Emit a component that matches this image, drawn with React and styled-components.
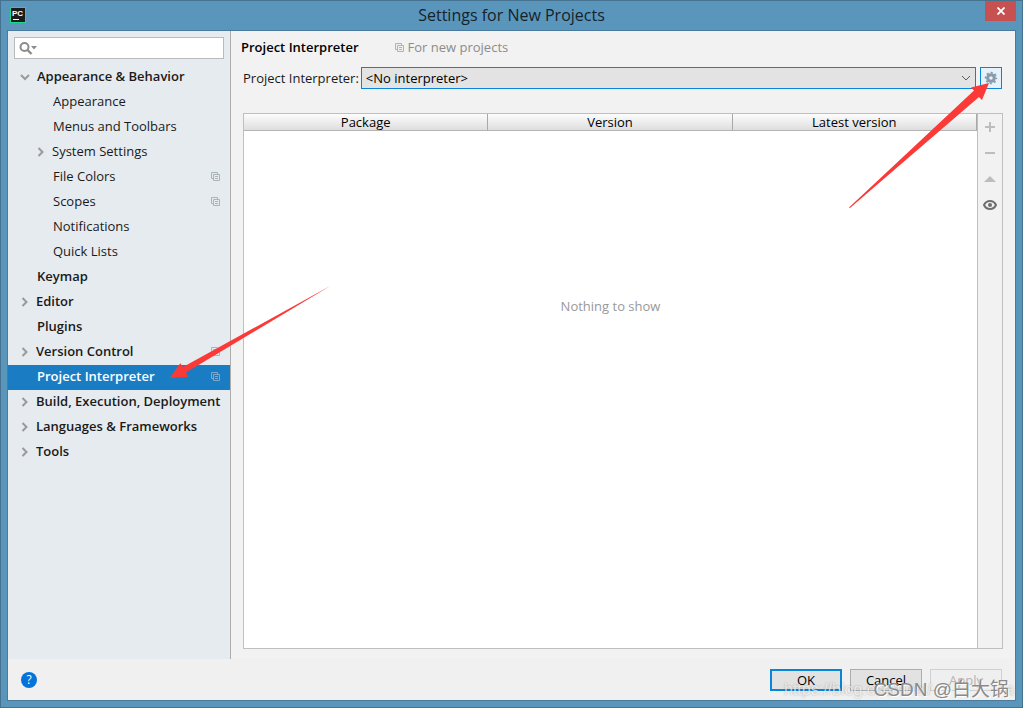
import React, { useState } from 'react';
import styled, { createGlobalStyle, css } from 'styled-components';

const GlobalStyle = createGlobalStyle`
  * {
    box-sizing: border-box;
  }

  body {
    margin: 0;
    font-family: 'Open Sans', 'Noto Sans CJK SC', sans-serif;
    font-size: 13px;
    color: #1a1a1a;
  }

  button, input, select {
    font: inherit;
    color: inherit;
    margin: 0;
    padding: 0;
    border-radius: 0;
    outline: none;
  }
`;

const Window = styled.div`
  position: relative;
  display: flex;
  flex-direction: column;
  min-height: 100vh;
  padding: 0 7px 6px;
  background: #5a96bc;
  border: 1px solid #44728f;
`;

const TitleBar = styled.header`
  display: grid;
  grid-template-columns: 32px 1fr 32px;
  align-items: start;
  height: 29px;
`;

const LogoBox = styled.span`
  display: flex;
  padding: 6px 0 0 2px;
`;

const WindowTitle = styled.h1`
  margin: 0;
  font-size: 16px;
  font-weight: 400;
  line-height: 29px;
  text-align: center;
  color: #16222b;
`;

const CloseButton = styled.button`
  display: flex;
  align-items: center;
  justify-content: center;
  justify-self: end;
  height: 20px;
  width: 31px;
  margin-right: -1px;
  border: 0;
  background: #c75050;
`;

const Dialog = styled.div`
  flex: 1;
  display: flex;
  flex-direction: column;
  border: 1px solid #4a7b9c;
  margin: 0 -1px;
  background: #f0f0f0;
`;

const Body = styled.div`
  flex: 1;
  display: flex;
`;

const Sidebar = styled.nav`
  flex: 0 0 223px;
  min-width: 0;
  border-right: 1px solid #adadad;
  background: #e6ebef;
`;

const SearchBox = styled.label`
  display: flex;
  align-items: center;
  height: 22px;
  margin: 6px 6px 5px;
  padding-left: 4px;
  border: 1px solid #bababa;
  background: #fff;
`;

const SearchInput = styled.input`
  flex: 1;
  min-width: 0;
  border: 0;
  background: transparent;
`;

const Tree = styled.ul`
  margin: 0;
  padding: 1px 0 0;
  list-style: none;
`;

const TreeRow = styled.a`
  display: flex;
  align-items: center;
  height: 25px;
  padding: 0 10px 2px ${({ $level }) => ($level ? 28 : 12)}px;
  text-decoration: none;
  white-space: nowrap;
  color: #1a1a1a;
  font-weight: ${({ $level }) => ($level ? 400 : 600)};

  ${({ $selected }) =>
    $selected &&
    css`
      background: #1a7dc4;
      color: #fff;
    `}
`;

const Arrow = styled.span`
  display: flex;
  flex: 0 0 ${({ $wide }) => ($wide ? 17 : 16)}px;
`;

const RowLabel = styled.span`
  flex: 1;
  min-width: 0;
  line-height: 16px;
  padding-bottom: 1px;
`;

const Content = styled.main`
  flex: 1;
  display: flex;
  flex-direction: column;
  min-width: 0;
  padding: 6px 12px 10px;
  background: #f2f2f2;
`;

const Heading = styled.div`
  display: flex;
  align-items: center;
  gap: 36px;
  height: 20px;
  margin-left: -2px;
`;

const HeadingTitle = styled.h2`
  margin: 0;
  font-size: 13px;
  font-weight: 600;
  color: #000;
`;

const Hint = styled.span`
  display: flex;
  align-items: center;
  gap: 4px;
  color: #8c8c8c;
`;

const InterpreterRow = styled.div`
  display: flex;
  align-items: center;
  gap: 4px;
  height: 22px;
  margin: 10px 1px 0 0;
`;

const FieldLabel = styled.label`
  flex: none;
  margin-right: -2px;
  white-space: nowrap;
`;

const SelectBox = styled.div`
  flex: 1;
  display: grid;
  align-items: center;
  height: 22px;
  border: 1px solid #0a84d8;
  background: #e3e3e3;

  > * {
    grid-area: 1 / 1;
  }

  > svg {
    justify-self: end;
    margin-right: 4px;
    pointer-events: none;
  }
`;

const Select = styled.select`
  appearance: none;
  width: 100%;
  height: 20px;
  padding-left: 4px;
  border: 0;
  background: transparent;
  color: #000;
`;

const GearButton = styled.button`
  display: flex;
  align-items: center;
  justify-content: center;
  width: 22px;
  height: 22px;
  border: 1px solid #0a84d8;
  background: #e5f1fb;
`;

const Packages = styled.section`
  flex: 1;
  display: flex;
  margin-top: 24px;
  border: 1px solid #bfbfbf;
`;

const TablePane = styled.div`
  flex: 1;
  background: #fff;
`;

const Table = styled.table`
  width: 100%;
  table-layout: fixed;
  border-collapse: separate;
  border-spacing: 0;
`;

const HeadCell = styled.th`
  height: 17px;
  padding: 0;
  font-weight: 400;
  line-height: 16px;
  color: #000;
  background: linear-gradient(#fdfdfd, #dedede);
  border-right: 1px solid #a8a8a8;
  border-bottom: 1px solid #b4b4b4;
`;

const EmptyCell = styled.td`
  padding: 166px 0 0;
  text-align: center;
  color: #999;
`;

const Actions = styled.div`
  display: flex;
  flex-direction: column;
  gap: 4px;
  width: 25px;
  padding-top: 2px;
  border-left: 1px solid #bfbfbf;
`;

const ActionButton = styled.button`
  display: flex;
  align-items: center;
  justify-content: center;
  height: 22px;
  border: 0;
  background: transparent;
`;

const Footer = styled.footer`
  display: flex;
  align-items: center;
  gap: 8px;
  height: 41px;
  padding: 1px 13px 0;
`;

const HelpButton = styled.button`
  width: 16px;
  height: 16px;
  margin-right: auto;
  border: 0;
  border-radius: 50%;
  background: #0573d8;
  color: #fff;
  font-size: 12px;
  line-height: 16px;
`;

const FooterButton = styled.button`
  width: 72px;
  height: 22px;
  border: ${({ $primary }) => ($primary ? '2px solid #0a84d8' : '1px solid #adadad')};
  background: #e2e2e2;
  line-height: 18px;
  color: #000;

  &:disabled {
    border-color: #d0d0d0;
    background: #efefef;
    color: #b4b4b4;
  }
`;

const Annotation = styled.svg`
  position: absolute;
  top: -1px;
  left: -1px;
  pointer-events: none;
`;

const Watermark = styled.span`
  position: absolute;
  right: 13px;
  bottom: 5px;
  font-family: 'Liberation Sans', 'Noto Sans CJK SC', sans-serif;
  font-size: 19px;
  line-height: 24px;
  color: #8a8a8a;
  text-shadow: 1px 1px 0 #fff;
  white-space: nowrap;
  pointer-events: none;
`;

const UrlMark = styled(Watermark)`
  display: flex;
  justify-content: space-between;
  width: 230px;
  right: 8px;
  font-size: 16px;
  color: rgba(255, 255, 255, 0.7);
  text-shadow: 0 0 2px rgba(0, 0, 0, 0.3);
`;

const PyCharmLogo = () => (
  <svg width="16" height="16" viewBox="0 0 16 16">
    <rect x="0.5" y="0.5" width="15" height="15" fill="#1c1c1c" stroke="#21d789" />
    <text x="2" y="9" fontSize="8" fontWeight="700" fill="#fff" fontFamily="Liberation Sans, sans-serif">
      PC
    </text>
    <path d="M3 12.5h6" stroke="#fff" />
  </svg>
);

const SearchIcon = () => (
  <svg width="19" height="14" viewBox="0 0 19 14" fill="none">
    <circle cx="5.5" cy="6" r="4" stroke="#8c8c8c" strokeWidth="2" />
    <path d="M8.5 9l4 4" stroke="#8c8c8c" strokeWidth="2.4" />
    <path d="M12 5h6l-3 3.5z" fill="#8c8c8c" />
  </svg>
);

const Chevron = ({ open }) => (
  <svg width="10" height="10" viewBox="0 0 10 10" fill="none" stroke="#9a9a9a" strokeWidth="2">
    <path d={open ? 'M1 3l4 4 4-4' : 'M2.5 1l4 4-4 4'} />
  </svg>
);

const CopyIcon = ({ color = '#a9b4ba' }) => (
  <svg width="9" height="9" viewBox="0 0 9 9" fill="none" stroke={color}>
    <path d="M2.5 6.5H0.5V0.5H6.5V2.5" />
    <path d="M2.5 2.5h6v6h-6zM4 4.5h3M4 6.5h3" />
  </svg>
);

const GearIcon = () => (
  <svg width="14" height="14" viewBox="0 0 14 14" fill="none" stroke="#8a9aa8">
    <circle cx="7" cy="7" r="3.3" strokeWidth="3" />
    <circle cx="7" cy="7" r="5.3" strokeWidth="1.8" strokeDasharray="2.1 2.063" strokeDashoffset="1.05" />
  </svg>
);

const EyeIcon = () => (
  <svg width="14" height="10" viewBox="0 0 14 10" fill="none" stroke="#6e6e6e">
    <path d="M1 5C3.5-0.3 10.5-0.3 13 5C10.5 10.3 3.5 10.3 1 5z" strokeWidth="2" />
    <circle cx="7" cy="5" r="2" fill="#6e6e6e" stroke="none" />
  </svg>
);

const treeItems = [
  { label: 'Appearance & Behavior', level: 0, arrow: 'open' },
  { label: 'Appearance', level: 1 },
  { label: 'Menus and Toolbars', level: 1 },
  { label: 'System Settings', level: 1, arrow: 'closed' },
  { label: 'File Colors', level: 1, copy: true },
  { label: 'Scopes', level: 1, copy: true },
  { label: 'Notifications', level: 1 },
  { label: 'Quick Lists', level: 1 },
  { label: 'Keymap', level: 0 },
  { label: 'Editor', level: 0, arrow: 'closed' },
  { label: 'Plugins', level: 0 },
  { label: 'Version Control', level: 0, arrow: 'closed', copy: true },
  { label: 'Project Interpreter', level: 0, copy: true },
  { label: 'Build, Execution, Deployment', level: 0, arrow: 'closed' },
  { label: 'Languages & Frameworks', level: 0, arrow: 'closed' },
  { label: 'Tools', level: 0, arrow: 'closed' },
];

const columns = ['Package', 'Version', 'Latest version'];

export default function App() {
  const [selected, setSelected] = useState('Project Interpreter');

  return (
    <>
      <GlobalStyle />
      <Window>
        <TitleBar>
          <LogoBox>
            <PyCharmLogo />
          </LogoBox>
          <WindowTitle>Settings for New Projects</WindowTitle>
          <CloseButton aria-label="Close">
            <svg width="8" height="8" viewBox="0 0 8 8" stroke="#fff" strokeWidth="1.8">
              <path d="M0.5 0.5l7 7M7.5 0.5l-7 7" />
            </svg>
          </CloseButton>
        </TitleBar>
        <Dialog>
          <Body>
            <Sidebar>
              <SearchBox>
                <SearchIcon />
                <SearchInput type="text" aria-label="Search settings" />
              </SearchBox>
              <Tree>
                {treeItems.map(({ label, level, arrow, copy }) => (
                  <li key={label}>
                    <TreeRow
                      href="#"
                      $level={level}
                      $selected={label === selected}
                      onClick={(e) => {
                        e.preventDefault();
                        setSelected(label);
                      }}
                    >
                      <Arrow $wide={arrow !== 'closed'}>{arrow && <Chevron open={arrow === 'open'} />}</Arrow>
                      <RowLabel>{label}</RowLabel>
                      {copy && <CopyIcon color={label === selected ? '#7fa9c9' : undefined} />}
                    </TreeRow>
                  </li>
                ))}
              </Tree>
            </Sidebar>
            <Content>
              <Heading>
                <HeadingTitle>Project Interpreter</HeadingTitle>
                <Hint>
                  <CopyIcon />
                  For new projects
                </Hint>
              </Heading>
              <InterpreterRow>
                <FieldLabel htmlFor="interpreter">Project Interpreter:</FieldLabel>
                <SelectBox>
                  <Select id="interpreter">
                    <option>&lt;No interpreter&gt;</option>
                  </Select>
                  <svg width="10" height="6" viewBox="0 0 10 6" fill="none" stroke="#5c5c5c">
                    <path d="M1 1l4 4 4-4" />
                  </svg>
                </SelectBox>
                <GearButton aria-label="Interpreter settings">
                  <GearIcon />
                </GearButton>
              </InterpreterRow>
              <Packages>
                <TablePane>
                  <Table>
                    <thead>
                      <tr>
                        {columns.map((name) => (
                          <HeadCell key={name}>{name}</HeadCell>
                        ))}
                      </tr>
                    </thead>
                    <tbody>
                      <tr>
                        <EmptyCell colSpan={3}>Nothing to show</EmptyCell>
                      </tr>
                    </tbody>
                  </Table>
                </TablePane>
                <Actions>
                  <ActionButton aria-label="Install">
                    <svg width="10" height="10" viewBox="0 0 10 10" stroke="#bdbdbd" strokeWidth="2">
                      <path d="M0 5h10M5 0v10" />
                    </svg>
                  </ActionButton>
                  <ActionButton aria-label="Uninstall">
                    <svg width="10" height="2" viewBox="0 0 10 2" fill="#bdbdbd">
                      <path d="M0 0h10v2H0z" />
                    </svg>
                  </ActionButton>
                  <ActionButton aria-label="Upgrade">
                    <svg width="12" height="6" viewBox="0 0 12 6" fill="#bdbdbd">
                      <path d="M0 6l6-6 6 6z" />
                    </svg>
                  </ActionButton>
                  <ActionButton aria-label="Show early releases">
                    <EyeIcon />
                  </ActionButton>
                </Actions>
              </Packages>
            </Content>
          </Body>
          <Footer>
            <HelpButton aria-label="Help">?</HelpButton>
            <FooterButton $primary>OK</FooterButton>
            <FooterButton>Cancel</FooterButton>
            <FooterButton disabled>Apply</FooterButton>
          </Footer>
        </Dialog>
        <UrlMark>
          <span>https://blog.csdn.net/</span>
          <span>a</span>
        </UrlMark>
        <Watermark>CSDN @白大锅</Watermark>
        <Annotation width="1023" height="400" viewBox="0 0 1023 400" fill="#fb3a38">
          <path d="M989 83L971 87.5L974 90.5L849 207.5L850 208L979 97L982 100z" />
          <path d="M170 377.7L180.3 363.3L183 367L331 285.5L186 372.5L188 377z" />
        </Annotation>
      </Window>
    </>
  );
}
